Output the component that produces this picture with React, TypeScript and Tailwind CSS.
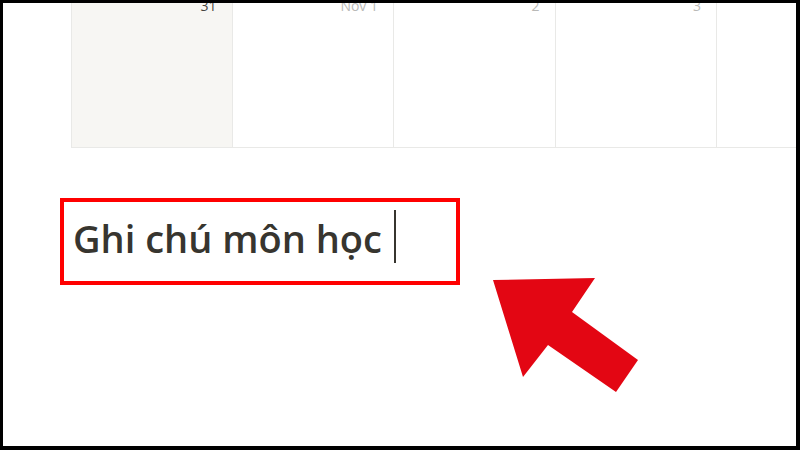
import React from 'react'

const days = [
  { label: '31', bg: 'bg-[#f7f6f3]', color: 'text-[#45433e]' },
  { label: 'Nov 1', bg: 'bg-white', color: 'text-[#b9b9b7]' },
  { label: '2', bg: 'bg-white', color: 'text-[#b9b9b7]' },
  { label: '3', bg: 'bg-white', color: 'text-[#b9b9b7]' },
  { label: '', bg: 'bg-white', color: 'text-[#b9b9b7]' },
]

export default function App() {
  return (
    <div
      className="relative w-[800px] h-[450px] overflow-hidden bg-white border-black border-t-[3px] border-l-[3px] border-r-4 border-b-4"
      style={{ fontFamily: '"Open Sans", "Noto Sans", sans-serif' }}
    >
      {/* Calendar week row, scrolled partly out of view */}
      <div className="-mt-[9px] ml-[68px] grid grid-cols-[repeat(5,161.5px)] border-b border-[#e9e9e7]">
        {days.map((d, i) => (
          <div
            key={i}
            className={`h-[153px] border-r border-[#e9e9e7] ${i === 0 ? 'border-l' : ''} ${d.bg} flex justify-end pt-[2px] pr-[15px]`}
          >
            <span className={`text-[14px] leading-5 ${d.color}`}>{d.label}</span>
          </div>
        ))}
      </div>

      {/* Page title being edited */}
      <div className="mt-[50px] ml-[57px] w-[400px] h-[87px] border-4 border-[#ff0000] flex items-start pl-[9px]">
        <span className="mt-[17px] text-[38px] font-semibold text-[#37352f] leading-none">
          Ghi chú môn học
        </span>
        <span className="mt-[8px] ml-[12px] w-[2px] h-[53px] bg-[#37352f]" />
      </div>

      {/* Red arrow annotation */}
      <svg
        className="absolute -top-[3px] -left-[3px] w-[800px] h-[450px] pointer-events-none"
        viewBox="0 0 800 450"
      >
        <polygon
          points="493,280 595,278 572,312 638,360 616,392 548,345 523,377"
          fill="#e30613"
        />
      </svg>
    </div>
  )
}
